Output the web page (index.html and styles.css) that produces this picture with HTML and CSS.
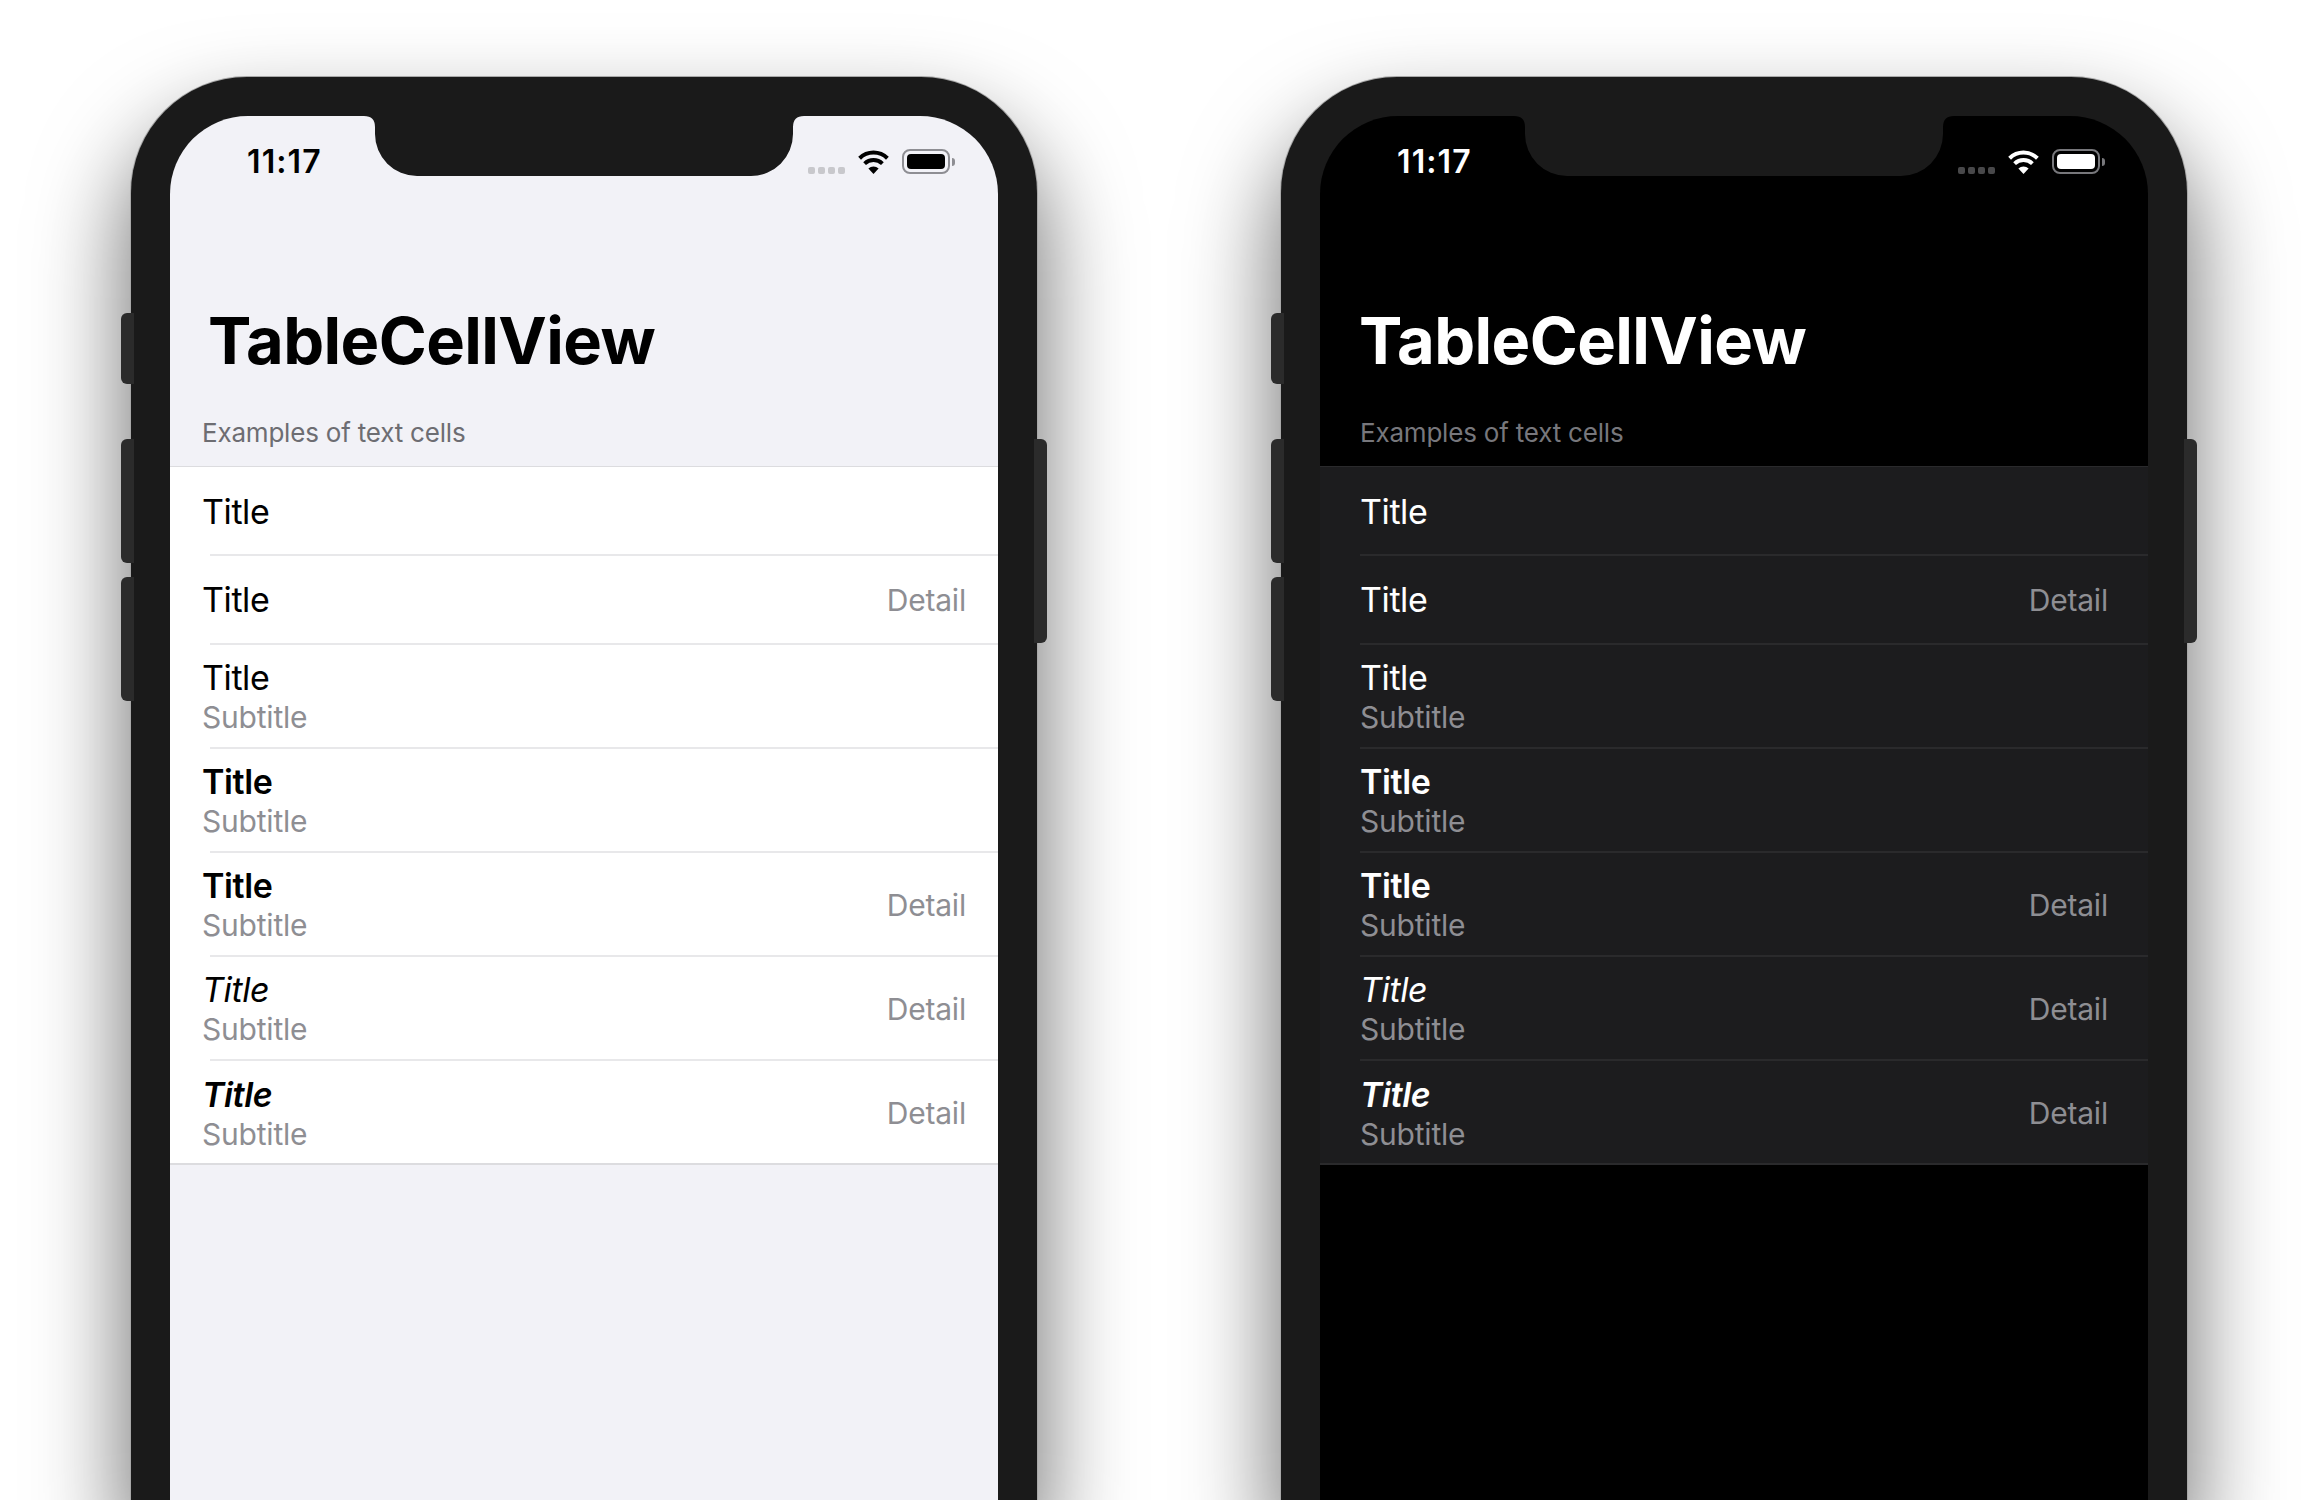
FILE: index.html
```html
<!DOCTYPE html>
<html lang="en">
<head>
    <meta charset="UTF-8">
    <title>TableCellView</title>
    <link rel="stylesheet" href="styles.css">
</head>
<body>
    <div class="phone">
        <span class="side-btn mute"></span>
        <span class="side-btn vol-up"></span>
        <span class="side-btn vol-down"></span>
        <span class="side-btn power"></span>
        <div class="screen">
            <svg class="notch" viewBox="0 0 440 60"><path d="M0 0Q11 0 11 11V18A42 42 0 0 0 53 60H387A42 42 0 0 0 429 18V11Q429 0 440 0Z"/></svg>
            <div class="status-bar">
                <span class="time">11:17</span>
                <div class="indicators">
                    <div class="signal"><i></i><i></i><i></i><i></i></div>
                    <svg class="wifi" viewBox="0 0 31 25">
                        <path class="wifi-arc" d="M1.6 9.2A20 20 0 0 1 29.4 9.2"/>
                        <path class="wifi-arc" d="M6.6 14.6A13 13 0 0 1 24.4 14.6"/>
                        <path class="wifi-dot" d="M15.5 25L10.4 19.6A7.4 7.4 0 0 1 20.6 19.6Z"/>
                    </svg>
                    <div class="battery"><div class="battery-fill"></div></div>
                    <span class="battery-nub"></span>
                </div>
            </div>
            <h1 class="large-title">TableCellView</h1>
            <p class="section-header">Examples of text cells</p>
            <ul class="list">
                <li class="row short"><div class="cell-text"><span class="title">Title</span></div></li>
                <li class="row short"><div class="cell-text"><span class="title">Title</span></div><span class="detail">Detail</span></li>
                <li class="row"><div class="cell-text"><span class="title">Title</span><span class="subtitle">Subtitle</span></div></li>
                <li class="row"><div class="cell-text"><span class="title bold">Title</span><span class="subtitle">Subtitle</span></div></li>
                <li class="row"><div class="cell-text"><span class="title bold">Title</span><span class="subtitle">Subtitle</span></div><span class="detail">Detail</span></li>
                <li class="row"><div class="cell-text"><span class="title italic">Title</span><span class="subtitle">Subtitle</span></div><span class="detail">Detail</span></li>
                <li class="row"><div class="cell-text"><span class="title bold italic">Title</span><span class="subtitle">Subtitle</span></div><span class="detail">Detail</span></li>
            </ul>
        </div>
    </div>

    <div class="phone dark">
        <span class="side-btn mute"></span>
        <span class="side-btn vol-up"></span>
        <span class="side-btn vol-down"></span>
        <span class="side-btn power"></span>
        <div class="screen">
            <svg class="notch" viewBox="0 0 440 60"><path d="M0 0Q11 0 11 11V18A42 42 0 0 0 53 60H387A42 42 0 0 0 429 18V11Q429 0 440 0Z"/></svg>
            <div class="status-bar">
                <span class="time">11:17</span>
                <div class="indicators">
                    <div class="signal"><i></i><i></i><i></i><i></i></div>
                    <svg class="wifi" viewBox="0 0 31 25">
                        <path class="wifi-arc" d="M1.6 9.2A20 20 0 0 1 29.4 9.2"/>
                        <path class="wifi-arc" d="M6.6 14.6A13 13 0 0 1 24.4 14.6"/>
                        <path class="wifi-dot" d="M15.5 25L10.4 19.6A7.4 7.4 0 0 1 20.6 19.6Z"/>
                    </svg>
                    <div class="battery"><div class="battery-fill"></div></div>
                    <span class="battery-nub"></span>
                </div>
            </div>
            <h1 class="large-title">TableCellView</h1>
            <p class="section-header">Examples of text cells</p>
            <ul class="list">
                <li class="row short"><div class="cell-text"><span class="title">Title</span></div></li>
                <li class="row short"><div class="cell-text"><span class="title">Title</span></div><span class="detail">Detail</span></li>
                <li class="row"><div class="cell-text"><span class="title">Title</span><span class="subtitle">Subtitle</span></div></li>
                <li class="row"><div class="cell-text"><span class="title bold">Title</span><span class="subtitle">Subtitle</span></div></li>
                <li class="row"><div class="cell-text"><span class="title bold">Title</span><span class="subtitle">Subtitle</span></div><span class="detail">Detail</span></li>
                <li class="row"><div class="cell-text"><span class="title italic">Title</span><span class="subtitle">Subtitle</span></div><span class="detail">Detail</span></li>
                <li class="row"><div class="cell-text"><span class="title bold italic">Title</span><span class="subtitle">Subtitle</span></div><span class="detail">Detail</span></li>
            </ul>
        </div>
    </div>
</body>
</html>
```

FILE: styles.css
```css
* {
    box-sizing: border-box;
}
html, body {
    height: 1500px;
    overflow: hidden;
}
body {
    margin: 0;
    background: white;
    font-family: Inter, "Liberation Sans", sans-serif;
    display: flex;
    justify-content: center;
    gap: 244px;
    padding-top: 77px;
}

/* phone body */
.phone {
    --inset: 32px;
    --title-inset: 38px;
    --screen-bg: #f2f2f7;
    --cell-bg: white;
    --text: black;
    --line: #e8e8ea;
    --edge-line: #dcdcdf;
    --header: #6d6d72;
    --dots: #c8c8cc;
    --battery-line: #8e8e93;
    position: relative;
    width: 906px;
    height: 1423px;
    flex: none;
    padding: 39px 39px 0;
    background: #1a1a1a;
    border-radius: 116px 116px 0 0;
    box-shadow: 0 0 0 1px #a8a8a8, 0 50px 90px 6px rgba(0, 0, 0, 0.55);
}
.phone.dark {
    --inset: 40px;
    --title-inset: 39px;
    --screen-bg: black;
    --cell-bg: #1c1c1e;
    --text: white;
    --line: #2a2a2c;
    --edge-line: #2a2a2c;
    --header: #77777c;
    --dots: #48484a;
    --battery-line: #77777b;
}
.side-btn {
    position: absolute;
    width: 13px;
    background: #2b2b2b;
}
.mute, .vol-up, .vol-down {
    left: -10px;
    border-radius: 6px 0 0 6px;
}
.mute {
    top: 236px;
    height: 71px;
}
.vol-up {
    top: 362px;
    height: 124px;
}
.vol-down {
    top: 500px;
    height: 124px;
}
.power {
    right: -10px;
    top: 362px;
    height: 204px;
    border-radius: 0 6px 6px 0;
}

/* screen */
.screen {
    position: relative;
    height: 100%;
    display: flex;
    flex-direction: column;
    background: var(--screen-bg);
    color: var(--text);
    border-radius: 78px 78px 0 0;
    overflow: hidden;
}
.notch {
    position: absolute;
    top: 0;
    left: 194px;
    width: 440px;
    height: 60px;
    fill: #1a1a1a;
}

/* status bar */
.status-bar {
    height: 58px;
    display: flex;
    align-items: flex-end;
    justify-content: space-between;
    padding: 0 43px 0 77px;
}
.time {
    font-size: 32px;
    font-weight: 600;
    line-height: 31px;
    margin-bottom: -3px;
    letter-spacing: 1.1px;
}
.indicators {
    display: flex;
    align-items: flex-end;
}
.signal {
    display: flex;
    gap: 3px;
    margin-right: 13px;
}
.signal i {
    width: 7px;
    height: 7px;
    border-radius: 2px;
    background: var(--dots);
}
.wifi {
    width: 31px;
    height: 25px;
    margin-right: 13px;
}
.wifi-arc {
    fill: none;
    stroke: var(--text);
    stroke-width: 4;
}
.wifi-dot {
    fill: var(--text);
}
.battery {
    width: 48px;
    height: 25px;
    padding: 3px;
    border: 2px solid var(--battery-line);
    border-radius: 8px;
}
.battery-fill {
    height: 100%;
    background: var(--text);
    border-radius: 4px;
}
.battery-nub {
    width: 3px;
    height: 8px;
    margin: 0 0 8px 2px;
    background: var(--battery-line);
    border-radius: 0 3px 3px 0;
}

/* headings */
.large-title {
    margin: 0;
    height: 200px;
    padding: 127px 0 0 var(--title-inset);
    font-size: 65px;
    font-weight: 700;
    line-height: 80px;
    letter-spacing: -0.6px;
}
.section-header {
    margin: 0;
    height: 92px;
    padding: 43px var(--inset) 0;
    font-size: 26px;
    line-height: 32px;
    letter-spacing: -0.2px;
    color: var(--header);
}

/* table */
.list {
    list-style: none;
    margin: 0;
    padding: 1px 0 0;
    background: var(--cell-bg);
    border-top: 1px solid var(--edge-line);
}
.row {
    position: relative;
    height: 104.1px;
    display: flex;
    align-items: center;
    justify-content: space-between;
    padding: 0 var(--inset);
    background: var(--cell-bg);
}
.row.short {
    height: 88.3px;
}
.row::after {
    content: "";
    position: absolute;
    left: 40px;
    right: 0;
    bottom: 0;
    height: 2px;
    background: var(--line);
}
.row:last-child::after {
    left: 0;
    background: var(--edge-line);
}
.cell-text {
    display: flex;
    flex-direction: column;
}
.title {
    font-size: 34px;
    line-height: 40px;
    letter-spacing: -0.4px;
}
.bold {
    font-weight: 600;
}
.italic {
    font-style: italic;
}
.subtitle {
    margin-top: 1px;
    font-size: 30px;
    line-height: 36px;
    letter-spacing: -0.2px;
    color: #8e8e93;
}
.detail {
    font-size: 30px;
    letter-spacing: -0.2px;
    color: #8e8e93;
}
```
